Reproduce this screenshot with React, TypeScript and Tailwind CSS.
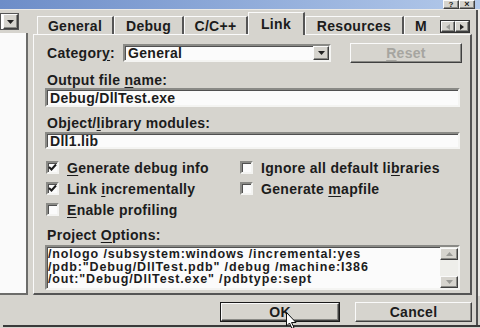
import React from "react";

const sunken =
  "border-2 border-t-[#8a8a86] border-l-[#8a8a86] border-b-[#f4f4f2] border-r-[#f4f4f2] shadow-[inset_1px_1px_0_#505050] bg-[#fbfbfb]";
const raised =
  "border border-t-[#fafafa] border-l-[#fafafa] border-b-[#404040] border-r-[#404040] shadow-[inset_-1px_-1px_0_#8a8a86]";

function Check({ checked }: { checked?: boolean }) {
  return (
    <div className={`w-[13px] h-[13px] shrink-0 flex items-center justify-center ${sunken}`}>
      {checked && (
        <svg width="9" height="9" viewBox="0 0 9 9">
          <path d="M1 4 L3.5 6.5 L8 1.5" stroke="#1a1a1a" strokeWidth="2" fill="none" />
        </svg>
      )}
    </div>
  );
}

function CheckRow({ checked, label }: { checked?: boolean; label: React.ReactNode }) {
  return (
    <div className="flex items-center gap-[8px]">
      <Check checked={checked} />
      <span className="leading-[14px] whitespace-nowrap">{label}</span>
    </div>
  );
}

function Tab({ w, label, active }: { w: number; label: string; active?: boolean }) {
  return (
    <div
      className={`shrink-0 flex items-center justify-center border-l border-t border-l-[#fafafa] border-t-[#fafafa] border-r-2 border-r-[#555] ${
        active ? "h-[23px] -mb-[1px] bg-[#d6d4ce] relative z-10" : "h-[18px]"
      }`}
      style={{ width: w }}
    >
      <span className="leading-[14px]">{label}</span>
    </div>
  );
}

export default function App() {
  return (
    <div className="relative w-[480px] h-[328px] overflow-hidden bg-[#d6d4ce] text-[#1c1c1c] font-bold text-[14px] tracking-[0.3px] font-['Liberation_Sans',Arial,sans-serif]">
      {/* title bar */}
      <div className="h-[9px] flex justify-end items-end bg-linear-to-r from-[#6d8dc8] to-[#b3c9ea] pr-[5px]">
        <div className={`w-[16px] h-[9px] bg-[#d6d4ce] ${raised} flex items-center justify-center overflow-hidden`}>
          <span className="text-[8px] leading-[7px] tracking-normal">?</span>
        </div>
        <div className={`w-[16px] h-[9px] bg-[#d6d4ce] ${raised} flex items-center justify-center overflow-hidden`}>
          <span className="text-[9px] leading-[7px] tracking-normal">×</span>
        </div>
      </div>
      <div className="h-[1px] bg-[#eceae6]" />

      {/* body */}
      <div className="flex h-[286px]">
        {/* left column */}
        <div className="w-[29px] shrink-0 flex flex-col">
          <div className="mt-[3px] h-[17px] w-[19px] flex border border-[#555] bg-white">
            <div className={`ml-[2px] w-[15px] h-[15px] bg-[#d6d4ce] ${raised} flex items-center justify-center`}>
              <svg width="7" height="4" viewBox="0 0 7 4">
                <path d="M0 0 H7 L3.5 4 Z" fill="#222" />
              </svg>
            </div>
          </div>
          <div className="mt-[3px] h-[262px] bg-[#fafafa] border-r-2 border-b-2 border-r-[#6c6c6a] border-b-[#6c6c6a] w-[28px]" />
        </div>

        {/* tab control */}
        <div className="ml-[4px] w-[439px] flex flex-col">
          <div className="h-[24px] flex items-end pl-[4px]">
            <Tab w={77} label="General" />
            <Tab w={70} label="Debug" />
            <Tab w={64} label="C/C++" />
            <Tab w={57} label="Link" active />
            <Tab w={99} label="Resources" />
            <div className="w-[36px] h-[18px] shrink-0 border-l border-t border-[#fafafa] overflow-hidden flex items-center pl-[10px]">
              <span className="leading-[14px]">M</span>
            </div>
            <div className="w-[30px] h-[13px] mb-[1px] flex border border-[#333] shrink-0">
              <div className={`w-[15px] h-full ${raised} flex items-center justify-center`}>
                <svg width="4" height="6" viewBox="0 0 4 6">
                  <path d="M4 0 V6 L0 3 Z" fill="#9a9a96" />
                </svg>
              </div>
              <div className={`w-[15px] h-full ${raised} flex items-center justify-center`}>
                <svg width="4" height="6" viewBox="0 0 4 6">
                  <path d="M0 0 V6 L4 3 Z" fill="#222" />
                </svg>
              </div>
            </div>
          </div>

          {/* panel */}
          <div className="h-[261px] border-l border-t border-l-[#fafafa] border-t-[#fafafa] border-r-2 border-b-2 border-r-[#555] border-b-[#555] flex flex-col pl-[11px]">
            {/* category row */}
            <div className="mt-[8px] h-[20px] flex items-center">
              <span className="ml-[2px] w-[76px] leading-[14px]">
                Categor<u className="underline-offset-2">y</u>:
              </span>
              <div className={`w-[208px] h-[18px] flex items-center ${sunken}`}>
                <span className="flex-1 pl-[3px] leading-[14px]">General</span>
                <div className={`w-[16px] h-[14px] bg-[#d6d4ce] ${raised} flex items-center justify-center`}>
                  <svg width="7" height="4" viewBox="0 0 7 4">
                    <path d="M0 0 H7 L3.5 4 Z" fill="#222" />
                  </svg>
                </div>
              </div>
              <div className={`ml-[19px] w-[112px] h-[20px] ${raised} flex items-center justify-center text-[#a6a5a0]`}>
                <span className="leading-[14px]">
                  <u className="underline-offset-2">R</u>eset
                </span>
              </div>
            </div>

            <div className="mt-[10px] h-[14px] ml-[2px] leading-[14px]">
              Output file <u className="underline-offset-2">n</u>ame:
            </div>
            <div className={`mt-[1px] w-[415px] h-[19px] flex items-center pl-[3px] ${sunken}`}>
              <span className="leading-[14px]">Debug/DllTest.exe</span>
            </div>

            <div className="mt-[9px] h-[14px] ml-[2px] leading-[14px]">
              Object/<u className="underline-offset-2">l</u>ibrary modules:
            </div>
            <div className={`mt-[2px] w-[415px] h-[17px] flex items-center pl-[3px] ${sunken}`}>
              <span className="leading-[14px]">Dll1.lib</span>
            </div>

            {/* checkboxes */}
            <div className="mt-[8px] flex flex-col">
              <div className="h-[21px] flex items-center">
                <div className="ml-[1px] w-[194px]">
                  <CheckRow checked label={<><u className="underline-offset-2">G</u>enerate debug info</>} />
                </div>
                <CheckRow label={<>Ignore all default li<u className="underline-offset-2">b</u>raries</>} />
              </div>
              <div className="h-[21px] flex items-center">
                <div className="ml-[1px] w-[194px]">
                  <CheckRow checked label={<>Link <u className="underline-offset-2">i</u>ncrementally</>} />
                </div>
                <CheckRow label={<>Generate <u className="underline-offset-2">m</u>apfile</>} />
              </div>
              <div className="h-[21px] flex items-center">
                <div className="ml-[1px] w-[194px]">
                  <CheckRow label={<><u className="underline-offset-2">E</u>nable profiling</>} />
                </div>
              </div>
            </div>

            <div className="mt-[8px] h-[14px] ml-[2px] leading-[14px]">
              Project <u className="underline-offset-2">O</u>ptions:
            </div>
            <div className={`mt-[3px] w-[415px] h-[45px] flex ${sunken}`}>
              <div className="flex-1 pl-[1px] pt-[1px] text-[12.5px] tracking-[0.85px] leading-[12.5px] whitespace-nowrap overflow-hidden">
                <div>/nologo /subsystem:windows /incremental:yes</div>
                <div>/pdb:"Debug/DllTest.pdb" /debug /machine:I386</div>
                <div>/out:"Debug/DllTest.exe" /pdbtype:sept</div>
              </div>
              <div className="w-[18px] flex flex-col justify-between bg-[#eeeeea]">
                <div className={`h-[12px] mt-[1px] bg-[#d6d4ce] ${raised} flex items-center justify-center`}>
                  <svg width="7" height="4" viewBox="0 0 7 4">
                    <path d="M0 4 H7 L3.5 0 Z" fill="#9a9a96" />
                  </svg>
                </div>
                <div className={`h-[12px] bg-[#d6d4ce] ${raised} flex items-center justify-center`}>
                  <svg width="7" height="4" viewBox="0 0 7 4">
                    <path d="M0 0 H7 L3.5 4 Z" fill="#9a9a96" />
                  </svg>
                </div>
              </div>
            </div>
          </div>
        </div>

        {/* right frame */}
        <div className="ml-[4px] w-[2px] bg-[#505050]" />
        <div className="w-[2px] bg-[#eceae6]" />
      </div>

      {/* buttons */}
      <div className="h-[29px] flex items-start pt-[6px] pl-[220px] relative">
        <div className="w-[120px] h-[20px] border border-[#1a1a1a] flex">
          <div className={`flex-1 ${raised} flex items-center justify-center`}>
            <span className="leading-[14px]">OK</span>
          </div>
        </div>
        <div className={`ml-[15px] w-[117px] h-[20px] ${raised} flex items-center justify-center`}>
          <span className="leading-[14px]">Cancel</span>
        </div>
        <div className="absolute right-[2px] top-0 bottom-0 w-[2px] bg-[#505050]" />
      </div>
      <div className="ml-[3px] h-[2px] bg-[#3a3a3a]" />

      {/* mouse cursor */}
      <svg className="absolute left-[286px] top-[312px]" width="12" height="18" viewBox="0 0 12 18">
        <path d="M0.5 0.5 L0.5 14 L3.5 11 L6 16.5 L8 15.5 L5.5 10.5 L10 10.5 Z" fill="#fff" stroke="#111" strokeWidth="1" />
      </svg>
    </div>
  );
}
